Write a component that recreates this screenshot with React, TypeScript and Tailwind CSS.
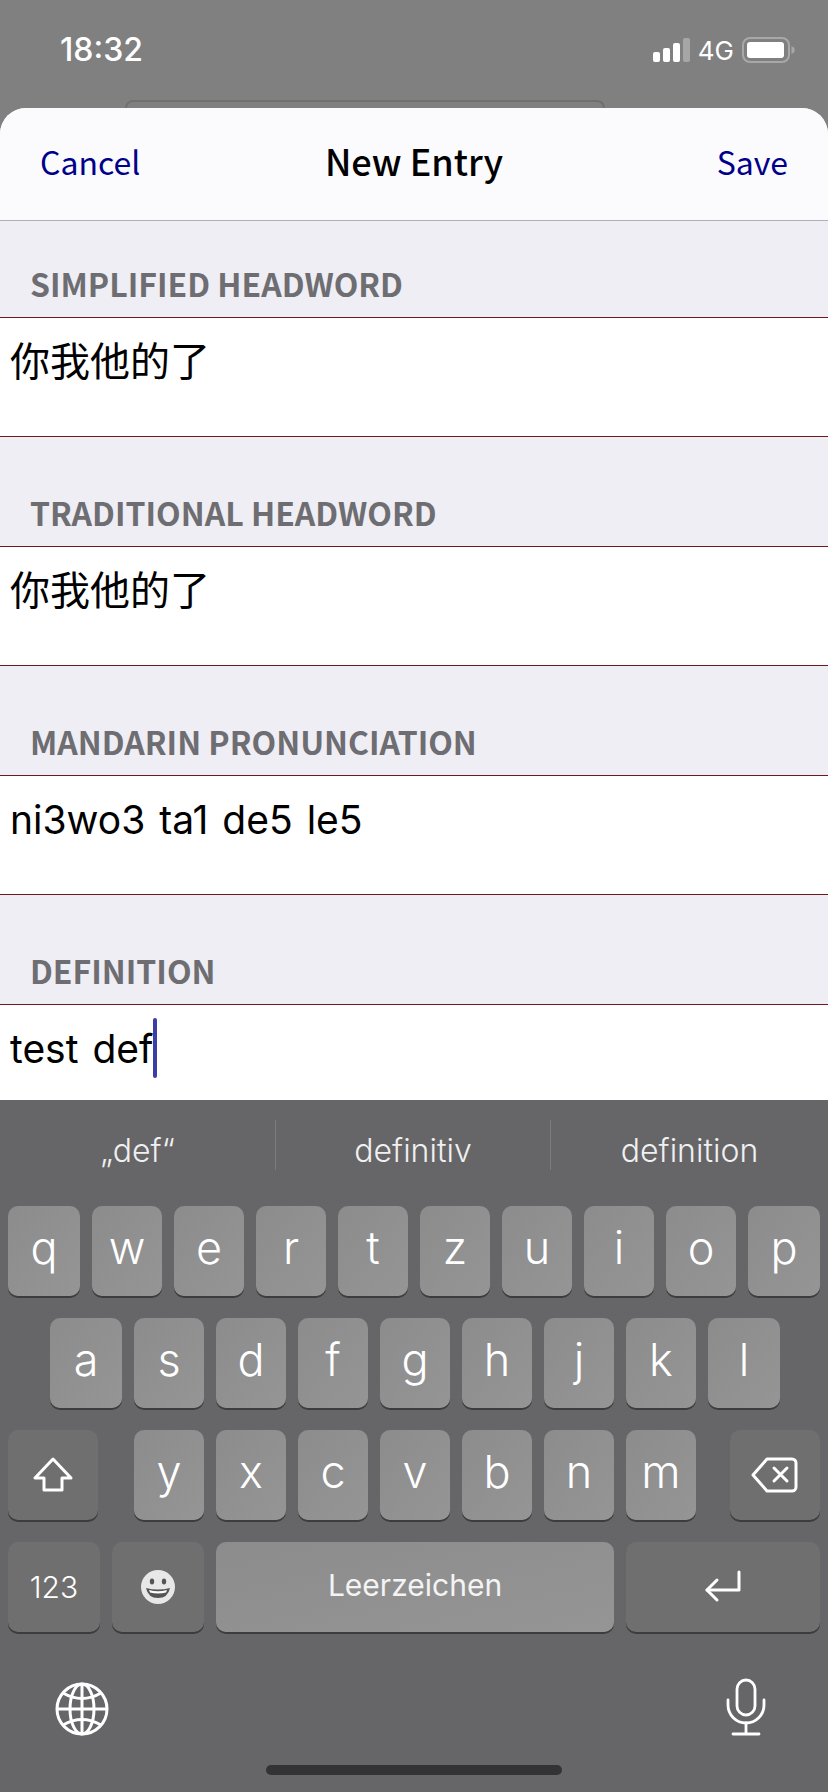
const ui = '[font-family:Inter,sans-serif]';
const cjk = "[font-family:'Noto_Sans_CJK_SC',sans-serif]";

function Key({ label, wide }: { label: string; wide?: boolean }) {
  return (
    <div className={`${wide ? 'w-[72px]' : 'w-[70px]'} h-[90px] flex items-center justify-center rounded-[10px] bg-gradient-to-br from-[#8c8c8d] to-[#959596] shadow-[0_2px_0_#3c3c3e] text-[45px] font-light text-white pb-[6px]`}>
      {label}
    </div>
  );
}

function DarkKey({ className, children }: { className: string; children: React.ReactNode }) {
  return (
    <div className={`${className} h-[90px] flex items-center justify-center rounded-[10px] bg-[#6f6f70] shadow-[0_2px_0_#3c3c3e] text-white`}>
      {children}
    </div>
  );
}

function Field({ label, value, first, cn, caret }: { label: string; value: string; first?: boolean; cn?: boolean; caret?: boolean }) {
  return (
    <div>
      <div className={`${first ? 'h-[96px]' : 'h-[109px]'} flex items-end pl-[30px] pb-[14px]`}>
        <span className={`${cjk} text-[32px] leading-[40px] font-bold text-[#6d6d72]`}>{label}</span>
      </div>
      <div className={`${caret ? 'h-[100px] border-t' : 'h-[120px] border-y'} border-[#6e1a1a] bg-white pl-[10px] pt-[13px] flex items-start`}>
        {cn ? (
          <span className={`${cjk} text-[40px] leading-[56px] text-black`}>{value}</span>
        ) : (
          <span className={`${ui} text-[39px] leading-[56px] text-black [word-spacing:3px] relative top-[3px]`}>{value}</span>
        )}
        {caret && <div className="w-[4px] h-[60px] ml-[0px] rounded-full bg-[#3d3da8]" />}
      </div>
    </div>
  );
}

function Status() {
  return (
    <div className="h-[100px] flex items-center justify-between pl-[60px] pr-[33px] text-white">
      <span className={`${ui} text-[32px] font-medium`}>18:32</span>
      <div className="flex items-center">
        <svg width="38" height="24" viewBox="0 0 38 24">
          <rect x="0" y="14" width="7" height="10" rx="2" fill="#fff" />
          <rect x="10" y="10" width="7" height="14" rx="2" fill="#fff" />
          <rect x="20" y="5" width="7" height="19" rx="2" fill="#fff" />
          <rect x="30" y="0" width="7" height="24" rx="2" fill="#a6a6a6" />
        </svg>
        <span className={`${ui} text-[26px] ml-[7px] mr-[8px]`}>4G</span>
        <svg width="53" height="26" viewBox="0 0 53 26">
          <rect x="1" y="1" width="46" height="24" rx="7" fill="none" stroke="#a8a8a8" strokeWidth="2" />
          <rect x="5" y="5" width="37" height="16" rx="3" fill="#fff" />
          <path d="M49.5 9 L52.5 11 V15 L49.5 17 Z" fill="#a8a8a8" />
        </svg>
      </div>
    </div>
  );
}

export default function App() {
  return (
    <div className="w-[828px] h-[1792px] overflow-hidden bg-[#808080] flex flex-col">
      <Status />
      <div className="h-[8px] w-[480px] ml-[125px] border-t-2 border-x-2 border-[#707070] rounded-t-[10px]" />

      {/* sheet */}
      <div className="h-[992px] bg-[#efeef4] rounded-t-[26px] overflow-hidden">
        <div className={`${cjk} h-[113px] flex items-center justify-between pl-[40px] pr-[40px] pb-[6px] bg-[#fbfbfd] border-b border-[#b0b0b4] relative`}>
          <span className="text-[32px] text-[#00008b]">Cancel</span>
          <span className="text-[36px] font-medium text-black absolute left-0 right-0 top-[25px] text-center">New Entry</span>
          <span className="text-[32px] text-[#00008b]">Save</span>
        </div>
        <Field first label="SIMPLIFIED HEADWORD" value="你我他的了" cn />
        <Field label="TRADITIONAL HEADWORD" value="你我他的了" cn />
        <Field label="MANDARIN PRONUNCIATION" value="ni3wo3 ta1 de5 le5" />
        <Field label="DEFINITION" value="test def" caret />
      </div>

      {/* keyboard */}
      <div className={`${ui} flex-1 bg-[#666668] flex flex-col`}>
        <div className="h-[106px] flex pt-[20px] text-[#f0f0f0] text-[32px] font-light">
          <div className="w-[275px] h-[50px] flex items-center justify-center pt-[12px]">„def“</div>
          <div className="w-[276px] h-[50px] flex items-center justify-center pt-[12px] border-x border-[#7c7c7e]">definitiv</div>
          <div className="w-[277px] h-[50px] flex items-center justify-center pt-[12px]">definition</div>
        </div>

        <div className="flex flex-col gap-[22px]">
          <div className="flex gap-[12px] px-[8px]">
            <Key label="q" wide />
            {['w', 'e', 'r', 't', 'z', 'u', 'i', 'o'].map((k) => <Key key={k} label={k} />)}
            <Key label="p" wide />
          </div>
          <div className="flex gap-[12px] pl-[50px]">
            <Key label="a" wide />
            {['s', 'd', 'f', 'g', 'h', 'j', 'k'].map((k) => <Key key={k} label={k} />)}
            <Key label="l" wide />
          </div>
          <div className="flex items-center px-[8px]">
            <DarkKey className="w-[90px] mr-[36px]">
              <svg width="40" height="36" viewBox="0 0 40 36" fill="none" stroke="#fff" strokeWidth="3" strokeLinejoin="round">
                <path d="M20 2 L2 21 H11 V33 H29 V21 H38 Z" />
              </svg>
            </DarkKey>
            <div className="flex gap-[12px]">
              {['y', 'x', 'c', 'v', 'b', 'n', 'm'].map((k) => <Key key={k} label={k} />)}
            </div>
            <DarkKey className="w-[90px] ml-[34px]">
              <svg width="48" height="36" viewBox="0 0 48 36" fill="none" stroke="#fff" strokeWidth="3" strokeLinejoin="round" strokeLinecap="round">
                <path d="M16 2 H41 a4 4 0 0 1 4 4 V30 a4 4 0 0 1 -4 4 H16 L2 18 Z" />
                <path d="M23 11 L36 24 M36 11 L23 24" />
              </svg>
            </DarkKey>
          </div>
          <div className="flex gap-[12px] px-[8px]">
            <DarkKey className="w-[92px]"><span className="text-[30px] font-light">123</span></DarkKey>
            <DarkKey className="w-[92px]">
              <svg width="36" height="36" viewBox="0 0 36 36">
                <circle cx="18" cy="18" r="17" fill="#e8e8e8" />
                <ellipse cx="12" cy="12.5" rx="2.2" ry="3" fill="#555" />
                <ellipse cx="24" cy="12.5" rx="2.2" ry="3" fill="#555" />
                <path d="M6 19 Q18 22 30 19 Q28 29 18 29 Q8 29 6 19 Z" fill="#555" />
                <path d="M9 21 Q18 23.5 27 21 L26 23.5 Q18 25.5 10 23.5 Z" fill="#fff" />
              </svg>
            </DarkKey>
            <div className="w-[398px] h-[90px] flex items-center justify-center rounded-[10px] bg-gradient-to-br from-[#8c8c8d] to-[#959596] shadow-[0_2px_0_#3c3c3e] text-[30px] text-[#f4f4f4] pb-[4px]">
              Leerzeichen
            </div>
            <DarkKey className="w-[194px]">
              <svg width="38" height="34" viewBox="0 0 38 34" fill="none" stroke="#fff" strokeWidth="3" strokeLinejoin="round" strokeLinecap="round">
                <path d="M35 2 V20 H3" />
                <path d="M13 10 L3 20 L13 30" />
              </svg>
            </DarkKey>
          </div>
        </div>

        <div className="flex items-start justify-between pl-[55px] pr-[62px] mt-[50px]">
          <svg width="54" height="54" viewBox="0 0 54 54" fill="none" stroke="#fff" strokeWidth="3">
            <circle cx="27" cy="27" r="25" />
            <ellipse cx="27" cy="27" rx="12" ry="25" />
            <path d="M27 2 V52 M2 27 H52" />
            <path d="M8 11 Q27 22 46 11 M8 43 Q27 32 46 43" />
          </svg>
          <svg width="40" height="58" viewBox="0 0 40 58" fill="none" stroke="#fff" strokeWidth="2.8" strokeLinecap="round" className="mt-[-4px]">
            <rect x="11" y="2" width="18" height="35" rx="9" />
            <path d="M2 22 V27 A18 18 0 0 0 38 27 V22" />
            <path d="M20 45 V56 M7 56 H33" />
          </svg>
        </div>

        <div className="w-[296px] h-[10px] mt-[29px] ml-[266px] rounded-full bg-[#333333]" />
      </div>
    </div>
  );
}
